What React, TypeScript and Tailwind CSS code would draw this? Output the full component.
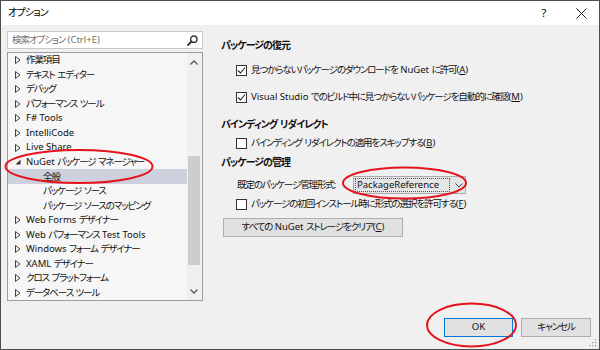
import React from "react";

const font = "[font-family:'Noto_Sans','Noto_Sans_CJK_JP',sans-serif] [font-feature-settings:'palt']";

const CJK = "text-[9.5px] tracking-[-1.1px]";
const CJK_B = "text-[10px] tracking-[-1px]";
const LAT = "text-[9.5px]";

function J({ s, cjk = CJK, lat = LAT }: { s: string; cjk?: string; lat?: string }) {
  const parts = s.split(/([\u3000-\u30ff\u3400-\u9fff\uff00-\uffef]+)/);
  return (
    <span className="whitespace-pre">
      {parts.map((p, i) =>
        p === "" ? null : (
          <span key={i} className={i % 2 === 1 ? cjk : lat}>
            {p}
          </span>
        )
      )}
    </span>
  );
}

type Item = { label: string; level: 0 | 1; arrow: "closed" | "open" | "none"; selected?: boolean };

const items: Item[] = [
  { label: "作業項目", level: 0, arrow: "closed" },
  { label: "テキスト エディター", level: 0, arrow: "closed" },
  { label: "デバッグ", level: 0, arrow: "closed" },
  { label: "パフォーマンス ツール", level: 0, arrow: "closed" },
  { label: "F# Tools", level: 0, arrow: "closed" },
  { label: "IntelliCode", level: 0, arrow: "closed" },
  { label: "Live Share", level: 0, arrow: "closed" },
  { label: "NuGet パッケージ マネージャー", level: 0, arrow: "open" },
  { label: "全般", level: 1, arrow: "none", selected: true },
  { label: "パッケージ ソース", level: 1, arrow: "none" },
  { label: "パッケージ ソースのマッピング", level: 1, arrow: "none" },
  { label: "Web Forms デザイナー", level: 0, arrow: "closed" },
  { label: "Web パフォーマンス Test Tools", level: 0, arrow: "closed" },
  { label: "Windows フォーム デザイナー", level: 0, arrow: "closed" },
  { label: "XAML デザイナー", level: 0, arrow: "closed" },
  { label: "クロス プラットフォーム", level: 0, arrow: "closed" },
  { label: "データベース ツール", level: 0, arrow: "closed" },
];

function Arrow({ type }: { type: Item["arrow"] }) {
  if (type === "closed")
    return (
      <svg width="6" height="8" viewBox="0 0 6 8" className="shrink-0">
        <polygon points="0.5,0.5 5,4 0.5,7.5" fill="none" stroke="#404040" strokeWidth="1" />
      </svg>
    );
  return (
    <svg width="6" height="8" viewBox="0 0 6 8" className="shrink-0">
      <polygon points="5.5,1.5 5.5,6.5 0.5,6.5" fill="#333" />
    </svg>
  );
}

function CheckBox({ checked }: { checked: boolean }) {
  return (
    <span className="w-[11px] h-[11px] border border-[#333333] bg-white flex items-center justify-center shrink-0">
      {checked && (
        <svg width="9" height="9" viewBox="0 0 9 9">
          <polyline points="1,4.5 3.5,7 8,1.5" fill="none" stroke="#222" strokeWidth="1.1" />
        </svg>
      )}
    </span>
  );
}

function CbRow({ checked, text, u, mt }: { checked: boolean; text: string; u: string; mt: string }) {
  return (
    <div className={`h-[16px] flex items-center gap-[4px] ml-[15px] ${mt}`}>
      <CheckBox checked={checked} />
      <span className="whitespace-nowrap">
        <J s={text} />
        <span className={LAT}>
          (<span className="underline">{u}</span>)
        </span>
      </span>
    </div>
  );
}

export default function App() {
  return (
    <div className={`w-[600px] h-[350px] relative bg-[#f0f0f0] border border-[#4d4d4d] flex flex-col text-[9.5px] text-[#111111] ${font}`}>
      {/* title bar */}
      <div className="h-[24px] bg-white flex items-center pl-[7px] shrink-0">
        <span className="text-black whitespace-nowrap">
          <J s="オプション" cjk="text-[10px] tracking-[-0.8px]" />
        </span>
        <div className="ml-auto flex items-center">
          <span className="text-[11px] text-black w-[20px] text-center mr-[22px]">?</span>
          <svg width="11" height="11" viewBox="0 0 11 11" className="mr-[12px]">
            <path d="M0.5 0.5 L10.5 10.5 M10.5 0.5 L0.5 10.5" stroke="#222" strokeWidth="1" />
          </svg>
        </div>
      </div>

      {/* body */}
      <div className="flex-1 flex flex-col">
        <div className="flex">
          {/* left */}
          <div className="ml-[6px] mt-[6px] w-[196px] flex flex-col">
            <div className="h-[18px] bg-white border border-[#c8c8c8] flex items-center pl-[4px] pr-[4px]">
              <span className="text-[#707070] whitespace-nowrap">
                <J s="検索オプション (Ctrl+E)" />
              </span>
              <svg width="11" height="11" viewBox="0 0 11 11" className="ml-auto">
                <circle cx="6.8" cy="4.2" r="3.2" fill="none" stroke="#333" strokeWidth="1.4" />
                <path d="M4.5 6.5 L1 10" stroke="#333" strokeWidth="1.8" strokeLinecap="round" />
              </svg>
            </div>
            <div className="mt-[3px] h-[249px] border border-[#9d9d9d] bg-[#f6f6f6] flex overflow-hidden">
              <div className="flex-1 flex flex-col">
                {items.map((it, i) => (
                  <div
                    key={i}
                    className={`h-[14.56px] flex items-center shrink-0 whitespace-nowrap ${it.selected ? "bg-[#cdd0dd]" : ""}`}
                  >
                    <span className={it.level === 1 ? "w-[35px] shrink-0" : "w-[7px] shrink-0"} />
                    {it.level === 0 && <Arrow type={it.arrow} />}
                    <span className={it.level === 0 ? "ml-[5px]" : ""}>
                      <J s={it.label} />
                    </span>
                  </div>
                ))}
              </div>
              {/* scrollbar */}
              <div className="w-[15px] bg-[#f0f0f0] flex flex-col items-center pr-[1px]">
                <div className="h-[18px] flex items-center justify-center">
                  <svg width="8" height="5" viewBox="0 0 8 5">
                    <polyline points="0.5,4.5 4,1 7.5,4.5" fill="none" stroke="#555" strokeWidth="1.3" />
                  </svg>
                </div>
                <div className="mt-[85px] w-[12px] h-[109px] bg-[#cdcdcd]" />
                <div className="mt-auto h-[18px] flex items-center justify-center">
                  <svg width="8" height="5" viewBox="0 0 8 5">
                    <polyline points="0.5,0.5 4,4 7.5,0.5" fill="none" stroke="#555" strokeWidth="1.3" />
                  </svg>
                </div>
              </div>
            </div>
          </div>

          {/* right */}
          <div className="ml-[18px] pt-[13px] flex flex-col">
            <div className="h-[16px] flex items-center font-bold whitespace-nowrap">
              <J s="パッケージの復元" cjk={CJK_B} />
            </div>
            <CbRow checked text="見つからないパッケージのダウンロードを NuGet に許可" u="A" mt="mt-[8px]" />
            <CbRow checked text="Visual Studio でのビルド中に見つからないパッケージを自動的に確認" u="M" mt="mt-[11px]" />
            <div className="h-[16px] flex items-center font-bold mt-[12px] whitespace-nowrap">
              <J s="バインディング リダイレクト" cjk={CJK_B} />
            </div>
            <CbRow checked={false} text="バインディング リダイレクトの適用をスキップする" u="B" mt="mt-[2px]" />
            <div className="h-[16px] flex items-center font-bold mt-[4px] whitespace-nowrap">
              <J s="パッケージの管理" cjk={CJK_B} />
            </div>
            <div className="h-[18px] flex items-center mt-[5px] ml-[16px]">
              <span className="whitespace-nowrap w-[116px]">
                <J s="既定のパッケージ管理形式:" />
              </span>
              <div className="w-[113px] h-[18px] bg-[#e5e5e5] border border-[#adadad] flex items-center">
                <div className="ml-[1px] w-[95px] h-[14px] border border-dotted border-[#555] flex items-center pl-[1px] whitespace-nowrap">
                  PackageReference
                </div>
                <svg width="8" height="5" viewBox="0 0 8 5" className="ml-[5px]">
                  <polyline points="0.5,0.5 4,4 7.5,0.5" fill="none" stroke="#444" strokeWidth="1" />
                </svg>
              </div>
            </div>
            <CbRow checked={false} text="パッケージの初回インストール時に形式の選択を許可する" u="F" mt="mt-[2px]" />
            <div className="mt-[6px] ml-[2px] w-[180px] h-[19px] bg-[#e1e1e1] border border-[#adadad] flex items-center justify-center whitespace-nowrap">
              <span>
                <J s="すべての NuGet ストレージをクリア" />
                <span className={LAT}>
                  (<span className="underline">C</span>)
                </span>
              </span>
            </div>
          </div>
        </div>

        {/* footer */}
        <div className="mt-auto flex justify-end gap-[8px] pr-[8px] pb-[12px]">
          <div className="w-[69px] h-[19px] bg-[#e1e1e1] border border-[#0078d7] flex items-center justify-center">OK</div>
          <div className="w-[70px] h-[19px] bg-[#e1e1e1] border border-[#adadad] flex items-center justify-center">
            <J s="キャンセル" />
          </div>
        </div>
      </div>

      {/* resize grip */}
      <svg width="8" height="8" viewBox="0 0 8 8" className="absolute right-[2px] bottom-[2px]">
        <rect x="6" y="0" width="1.2" height="1.2" fill="#999" />
        <rect x="3" y="3" width="1.2" height="1.2" fill="#999" />
        <rect x="6" y="3" width="1.2" height="1.2" fill="#999" />
        <rect x="0" y="6" width="1.2" height="1.2" fill="#999" />
        <rect x="3" y="6" width="1.2" height="1.2" fill="#999" />
        <rect x="6" y="6" width="1.2" height="1.2" fill="#999" />
      </svg>

      {/* red annotation ellipses */}
      <svg width="600" height="350" className="absolute left-[-1px] top-[-1px] pointer-events-none">
        <ellipse cx="79" cy="166.5" rx="73.5" ry="16.5" fill="none" stroke="#e5141c" strokeWidth="2" />
        <ellipse cx="404.5" cy="183" rx="61.5" ry="15.5" fill="none" stroke="#e5141c" strokeWidth="2" />
        <ellipse cx="471.5" cy="325" rx="44.5" ry="21.5" fill="none" stroke="#e5141c" strokeWidth="2" />
      </svg>
    </div>
  );
}
